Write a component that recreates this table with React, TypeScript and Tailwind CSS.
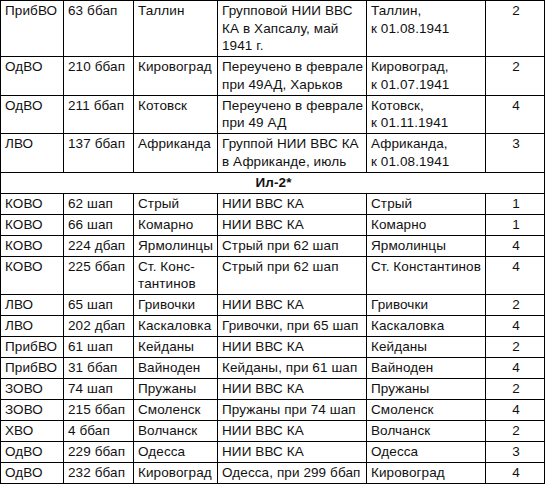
type Row = {
  district: string
  unit: string
  base: string
  trainer: string[]
  place: string[]
  count: string
}

// Су-2 (начало таблицы)
const topRows: Row[] = [
  { district: 'ПрибВО', unit: '63 ббап', base: 'Таллин', trainer: ['Групповой НИИ ВВС', 'КА в Хапсалу, май', '1941 г.'], place: ['Таллин,', 'к 01.08.1941'], count: '2' },
  { district: 'ОдВО', unit: '210 ббап', base: 'Кировоград', trainer: ['Переучено в феврале', 'при 49АД, Харьков'], place: ['Кировоград,', 'к 01.07.1941'], count: '2' },
  { district: 'ОдВО', unit: '211 ббап', base: 'Котовск', trainer: ['Переучено в феврале', 'при 49 АД'], place: ['Котовск,', 'к 01.11.1941'], count: '4' },
  { district: 'ЛВО', unit: '137 ббап', base: 'Африканда', trainer: ['Группой НИИ ВВС КА', 'в Африканде, июль'], place: ['Африканда,', 'к 01.08.1941'], count: '3' },
]

// Ил-2
const il2Rows: Row[] = [
  { district: 'КОВО', unit: '62 шап', base: 'Стрый', trainer: ['НИИ ВВС КА'], place: ['Стрый'], count: '1' },
  { district: 'КОВО', unit: '66 шап', base: 'Комарно', trainer: ['НИИ ВВС КА'], place: ['Комарно'], count: '1' },
  { district: 'КОВО', unit: '224 дбап', base: 'Ярмолинцы', trainer: ['Стрый при 62 шап'], place: ['Ярмолинцы'], count: '4' },
  { district: 'КОВО', unit: '225 ббап', base: 'Ст. Конс-\nтантинов', trainer: ['Стрый при 62 шап'], place: ['Ст. Константинов'], count: '4' },
  { district: 'ЛВО', unit: '65 шап', base: 'Гривочки', trainer: ['НИИ ВВС КА'], place: ['Гривочки'], count: '2' },
  { district: 'ЛВО', unit: '202 дбап', base: 'Каскаловка', trainer: ['Гривочки, при 65 шап'], place: ['Каскаловка'], count: '4' },
  { district: 'ПрибВО', unit: '61 шап', base: 'Кейданы', trainer: ['НИИ ВВС КА'], place: ['Кейданы'], count: '2' },
  { district: 'ПрибВО', unit: '31 ббап', base: 'Вайноден', trainer: ['Кейданы, при 61 шап'], place: ['Вайноден'], count: '4' },
  { district: 'ЗОВО', unit: '74 шап', base: 'Пружаны', trainer: ['НИИ ВВС КА'], place: ['Пружаны'], count: '2' },
  { district: 'ЗОВО', unit: '215 ббап', base: 'Смоленск', trainer: ['Пружаны при 74 шап'], place: ['Смоленск'], count: '4' },
  { district: 'ХВО', unit: '4 ббап', base: 'Волчанск', trainer: ['НИИ ВВС КА'], place: ['Волчанск'], count: '2' },
  { district: 'ОдВО', unit: '229 ббап', base: 'Одесса', trainer: ['НИИ ВВС КА'], place: ['Одесса'], count: '3' },
  { district: 'ОдВО', unit: '232 ббап', base: 'Кировоград', trainer: ['Одесса, при 299 ббап'], place: ['Кировоград'], count: '4' },
]

const cell = 'border border-black align-top pl-[4px] pr-[2px] pt-[1px] pb-[1.5px] whitespace-pre'

function Lines({ items }: { items: string[] }) {
  return <>{items.join('\n')}</>
}

function TableRow({ row }: { row: Row }) {
  return (
    <tr>
      <td className={cell}>{row.district}</td>
      <td className={cell}>{row.unit}</td>
      <td className={cell}>{row.base}</td>
      <td className={cell}><Lines items={row.trainer} /></td>
      <td className={cell}><Lines items={row.place} /></td>
      <td className={`${cell} text-center`}>{row.count}</td>
    </tr>
  )
}

export default function App() {
  return (
    <div className="w-[547px] h-[493px] bg-white overflow-hidden">
      <table className="table-fixed border-collapse w-[544px] text-[13.5px] leading-[17.5px] tracking-[0.1px] text-[#111] font-['Liberation_Sans',Arial,sans-serif]">
        <colgroup>
          <col className="w-[63px]" />
          <col className="w-[70px]" />
          <col className="w-[84px]" />
          <col className="w-[149px]" />
          <col className="w-[119px]" />
          <col className="w-[59px]" />
        </colgroup>
        <tbody>
          {topRows.map((r) => (
            <TableRow key={r.unit} row={r} />
          ))}
          <tr>
            <td colSpan={6} className={`${cell} text-center font-bold`}>Ил-2*</td>
          </tr>
          {il2Rows.map((r) => (
            <TableRow key={r.unit} row={r} />
          ))}
        </tbody>
      </table>
    </div>
  )
}
